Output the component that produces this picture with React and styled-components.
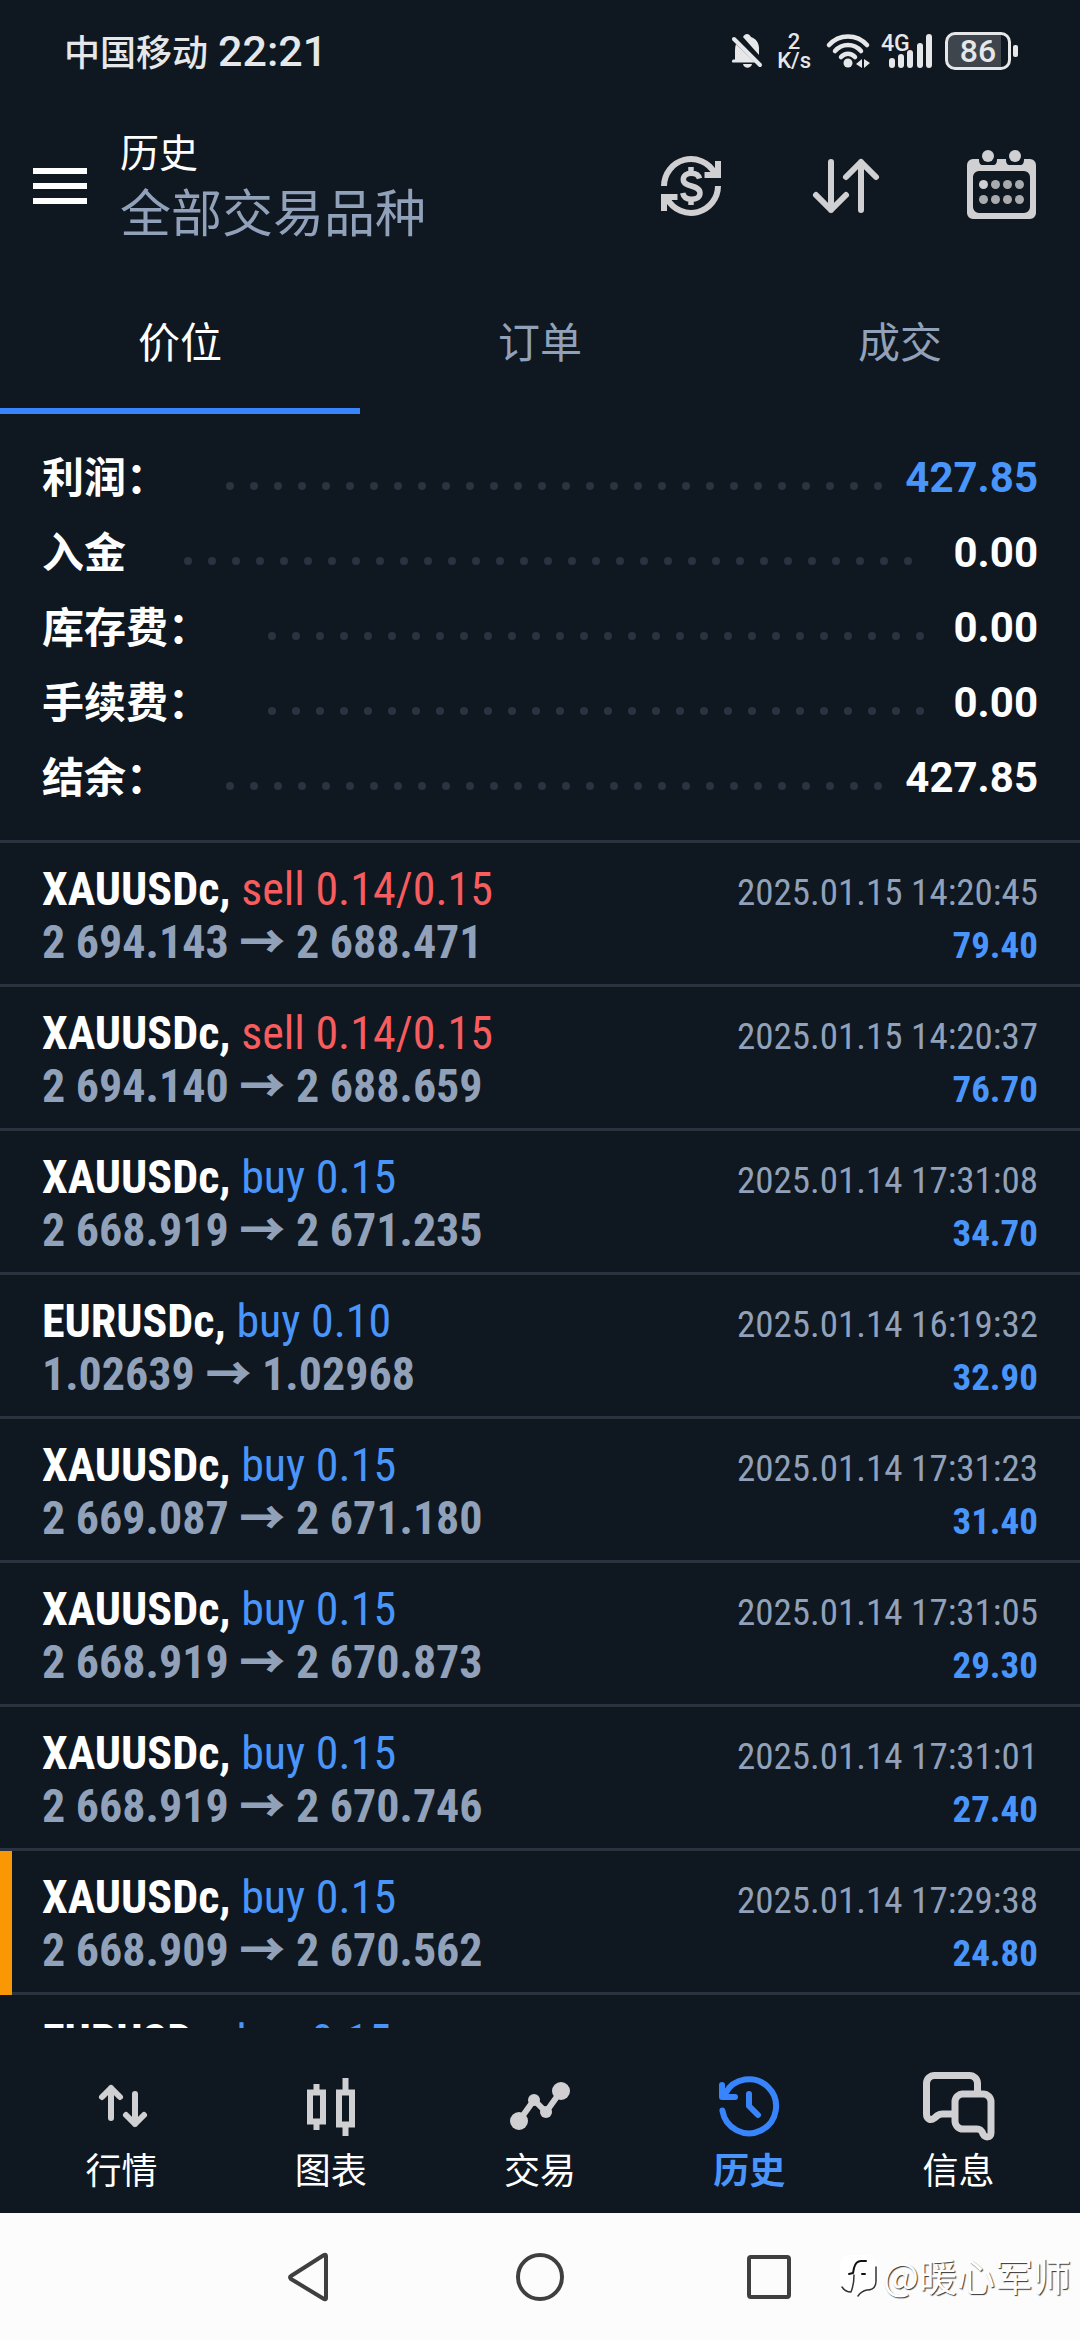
import styled, { createGlobalStyle, css } from "styled-components";

const GlobalStyle = createGlobalStyle`
  :root {
    --bg: #0f1720;
    --line: #2a3441;
    --muted: #90a1b9;
    --blue: #4a95fa;
    --accent: #3784fc;
    --red: #f75c5e;
    --icon: #d0d0d2;
    --status: #e6e7e9;
    --marker: #f99804;
  }

  * {
    box-sizing: border-box;
  }

  body {
    margin: 0;
    background: var(--bg);
    color: #fff;
    font-family: Roboto, "Noto Sans CJK SC", sans-serif;
  }

  button {
    border: 0;
    padding: 0;
    background: none;
    color: inherit;
    font: inherit;
  }

  svg {
    display: block;
    overflow: visible;
  }
`;

const Screen = styled.div`
  height: 100vh;
  display: flex;
  flex-direction: column;
`;

const StatusBar = styled.div`
  flex: none;
  height: 102px;
  padding: 0 62px 0 64px;
  display: flex;
  align-items: center;
  color: var(--status);
`;

const Carrier = styled.span`
  padding-bottom: 3px;
  font-family: "Noto Sans CJK SC", sans-serif;
  font-size: 36px;
  font-weight: 500;
  line-height: 48px;
`;

const Clock = styled.time`
  margin: 0 auto 0 10px;
  font-size: 43px;
  font-weight: 500;
  line-height: 48px;
`;

const NetSpeed = styled.span`
  margin: 0 14px;
  font-size: 22px;
  font-weight: 500;
  line-height: 19px;
  text-align: center;
`;

const SignalWrap = styled.span`
  margin-left: 10px;
`;

const Battery = styled.span`
  width: 66px;
  height: 38px;
  margin-left: 12px;
  border: 3px solid var(--status);
  border-radius: 10px;
  background: linear-gradient(90deg, #3f454d 88%, transparent 88%);
  font-size: 32px;
  font-weight: 500;
  line-height: 33px;
  text-align: center;
`;

const BatteryTip = styled.span`
  width: 5px;
  height: 12px;
  margin-left: 2px;
  border-radius: 2px;
  background: var(--status);
`;

const Header = styled.header`
  flex: none;
  height: 168px;
  padding: 0 43px 0 33px;
  display: flex;
  align-items: center;
`;

const Title = styled.h1`
  flex: 1;
  margin: 0 0 12px 33px;
  font-family: "Noto Sans CJK SC", sans-serif;
  font-size: 39px;
  font-weight: 400;
  line-height: 60px;
`;

const Subtitle = styled.span`
  display: block;
  color: var(--muted);
  font-size: 51px;
`;

const Actions = styled.div`
  display: flex;
  gap: 83px;
  color: var(--icon);
`;

const Tabs = styled.div`
  flex: none;
  display: grid;
  grid-template-columns: repeat(3, 1fr);
`;

const Tab = styled.button`
  height: 144px;
  padding-bottom: 6px;
  font-family: "Noto Sans CJK SC", sans-serif;
  font-size: 42px;
  color: ${({ $active }) => ($active ? "#fff" : "var(--muted)")};
  box-shadow: ${({ $active }) => ($active ? "inset 0 -6px var(--accent)" : "none")};
`;

const Summary = styled.dl`
  flex: none;
  margin: 0;
  padding: 26px 42px 25px;
  font-size: 42px;
  font-weight: 700;
  line-height: 60px;
`;

const SummaryRow = styled.div`
  height: 75px;
  display: flex;
  align-items: center;
`;

const Label = styled.dt`
  padding-bottom: 6px;
  font-family: "Noto Sans CJK SC", sans-serif;
`;

const Amount = styled.dd`
  margin: 0;
  color: ${({ $profit }) => ($profit ? "var(--blue)" : "#fff")};
`;

// dots that do not fit wrap to a second line, which is hidden
const Leader = styled.span`
  flex: 1;
  height: 8px;
  margin: 16px 14px 0 50px;
  overflow: hidden;
  display: flex;
  flex-wrap: wrap;
`;

const Dot = styled.i`
  width: 8px;
  height: 8px;
  margin: 0 8px;
  border-radius: 50%;
  background: var(--line);
`;

const TradeList = styled.ul`
  flex: 1;
  min-height: 0;
  margin: 0;
  padding: 0;
  overflow: hidden;
  list-style: none;
  font-family: "Roboto Condensed", "Liberation Sans Narrow", sans-serif;
  font-size: 46px;
  line-height: 51px;
`;

const TradeItem = styled.li`
  position: relative;
  border-top: 3px solid var(--line);
  padding: 21px 42px 18px;

  ${({ $marked }) =>
    $marked &&
    css`
      &::before {
        content: "";
        position: absolute;
        z-index: 1;
        top: 0;
        bottom: -3px;
        left: 0;
        width: 12px;
        background: var(--marker);
      }
    `}
`;

const Line = styled.div`
  height: 51px;
  display: flex;
  justify-content: space-between;
  align-items: baseline;
  white-space: nowrap;
`;

const Side = styled.span`
  font-weight: 400;
  color: ${({ $side }) => ($side === "sell" ? "var(--red)" : "var(--blue)")};
`;

const Prices = styled.span`
  font-weight: 700;
  color: var(--muted);
`;

const Arrow = styled.span`
  font-family: "Noto Sans CJK SC", sans-serif;
  font-weight: 900;
  line-height: 1;
`;

const Time = styled.time`
  font-size: 37px;
  color: var(--muted);
`;

const Profit = styled.strong`
  font-size: 37px;
  color: var(--blue);
`;

const BottomNav = styled.nav`
  flex: none;
  padding: 42px 17px 18px;
  display: grid;
  grid-template-columns: repeat(5, 1fr);
`;

const NavLink = styled.a`
  display: flex;
  flex-direction: column;
  align-items: center;
  font-family: "Noto Sans CJK SC", sans-serif;
  font-size: 36px;
  font-weight: ${({ $active }) => ($active ? 700 : 400)};
  line-height: 53px;
  text-decoration: none;
  color: ${({ $active }) => ($active ? "var(--blue)" : "#fff")};

  svg {
    color: ${({ $active }) => ($active ? "var(--accent)" : "var(--icon)")};
  }
`;

const SystemNav = styled.div`
  flex: none;
  position: relative;
  height: 127px;
  display: flex;
  justify-content: center;
  align-items: center;
  gap: 158px;
  background: #fcfcfc;
  color: #3f3f3f;
`;

const Watermark = styled.div`
  position: absolute;
  right: 9px;
  bottom: 40px;
  display: flex;
  align-items: center;
  gap: 4px;
  font-family: "Noto Sans CJK SC", sans-serif;
  font-size: 38px;
  line-height: 50px;
  color: #fff;
  text-shadow: 1px 1px 1px #333;
`;

const Icon = ({ size = 72, width = size, height = size, sw = 6, children }) => (
  <svg
    width={width}
    height={height}
    viewBox={`0 0 ${width} ${height}`}
    fill="none"
    stroke="currentColor"
    strokeWidth={sw}
    strokeLinecap="round"
    strokeLinejoin="round"
    aria-hidden="true"
  >
    {children}
  </svg>
);

const BellOffIcon = () => (
  <Icon width={32} height={36} sw={4}>
    <g fill="currentColor" stroke="none">
      <path d="M12 4C13 2 14.500 1 16 1s3 1 4 3c5 1.500 8 6 8 11v7z" />
      <path d="M5 11 24 29.500H2c-1.500 0-1.500-2 0-3h2V17c0-2 .3-4 1-6z" />
      <path d="M12 31h9c-1 5-8 5-9 0z" />
    </g>
    <path d="M3 6 29 32" />
  </Icon>
);

const WifiIcon = () => (
  <Icon width={46} height={36} sw={4.5}>
    <path d="M4 12C14 .5 32 .5 42 12M10 18c7-8 19-8 26 0M16 24c4-4.500 10-4.500 14 0" />
    <circle cx="23" cy="30" r="4.500" fill="currentColor" stroke="none" />
    <path d="M37 26v9l-6-4zM39 26v9l6-5z" fill="currentColor" stroke="none" />
  </Icon>
);

const SignalText = styled.text`
  font-size: 23px;
  font-weight: 500;
  fill: currentColor;
  stroke: none;
`;

const SignalIcon = () => (
  <Icon width={52} height={38}>
    <SignalText x="0" y="19">4G</SignalText>
    <path d="M11 29v4M20 25v8M29 21v12M39 14v19M48 5v28" />
  </Icon>
);

const MenuIcon = () => (
  <svg width="54" height="36" fill="#fff" aria-hidden="true">
    <path d="M0 0h54v6H0zM0 15h54v6H0zM0 30h54v6H0z" />
  </svg>
);

const CurrencyIcon = () => (
  <Icon>
    <g strokeLinecap="butt" strokeLinejoin="miter">
      <path d="M9 36A27 27 0 0 1 59.500 22.800M63 11v14H49.500" />
      <path d="M63 36A27 27 0 0 1 12.500 49.200M9 61V47h13.500" />
      <path
        strokeWidth="5.500"
        d="M44.500 28.500C43.500 25 40.500 23.200 36.500 23.200c-5 0-8.200 2.600-8.200 6.300 0 8.500 16.700 4.500 16.700 13.500 0 4-3.500 6.300-8.500 6.300s-8-2.300-8.800-6.300M36 17v6M36 49v6"
      />
    </g>
  </Icon>
);

const SortIcon = () => (
  <Icon>
    <path d="M21 12v48M6 45l15 15 15-15M51 60V12M36 27l15-15 15 15" />
  </Icon>
);

const CalendarIcon = () => (
  <Icon>
    <g fill="currentColor" stroke="none">
      <path
        fillRule="evenodd"
        d="M8 9h6c0 4 1 6 4 6h10c3 0 4-2 4-6h9c0 4 1 6 4 6h10c3 0 4-2 4-6h6a6 6 0 0 1 6 6v48a6 6 0 0 1-6 6H8a6 6 0 0 1-6-6V15a6 6 0 0 1 6-6zM14 21a6 6 0 0 0-6 6v30a6 6 0 0 0 6 6h45a6 6 0 0 0 6-6V27a6 6 0 0 0-6-6z"
      />
      <circle cx="23" cy="6" r="6" />
      <circle cx="50" cy="6" r="6" />
      {[34.5, 49.5].map((cy) =>
        [18.5, 30.5, 42.5, 54.5].map((cx) => (
          <circle
            key={`${cx}-${cy}`}
            cx={cx}
            cy={cy}
            r="4.500"
            opacity={cx < 20 && cy < 40 ? 1 : 0.8}
          />
        ))
      )}
    </g>
  </Icon>
);

const QuotesIcon = () => (
  <Icon>
    <path d="M25 48V18M16 27l9-9 9 9M49 24v30M40 45l9 9 9-9" />
  </Icon>
);

const ChartIcon = () => (
  <Icon>
    <g strokeLinecap="butt" strokeLinejoin="miter">
      <path d="M15 22.500h13v29H15zM44 22.500h13v32H44zM21.500 14v6M21.500 54v6M50.500 8v12M50.500 57v9" />
    </g>
  </Icon>
);

const TradeIcon = () => (
  <Icon>
    <path d="M15 51 30 30l12 12 15-21" />
    <g fill="currentColor" stroke="none">
      <circle cx="15" cy="51" r="9" />
      <circle cx="30" cy="30" r="6" />
      <circle cx="42" cy="42" r="6" />
      <circle cx="57" cy="21" r="9" />
    </g>
  </Icon>
);

const HistoryIcon = () => (
  <Icon>
    <path d="M9.400 40.500A27 27 0 1 0 12 24M9 15v12h13M36 24v12l9 9" />
  </Icon>
);

const MessagesIcon = () => (
  <Icon sw={7}>
    <path d="M55.500 21v-7.500a8 8 0 0 0-8-8h-35a8 8 0 0 0-8 8V44c0 5 4 7 8 4l3-2.500c1.500-1 3-1.500 5-1.500H30" />
    <path d="M40 24h21a8 8 0 0 1 8 8v31c0 5-6 5-8 1-1.500-4-3-5-6-5H41a8 8 0 0 1-8-8V32a8 8 0 0 1 8-8z" />
  </Icon>
);

const FlameLogo = () => (
  <Icon width={40} height={44} sw={2}>
    <rect x="1" y="2" width="36" height="36" rx="10" fill="#fff" stroke="none" />
    <path stroke="#111" d="M27 8h-5c-4 0-6 3-7 7l-1 5-4 1M23 21h3" />
    <path stroke="#333" strokeWidth="1.500" d="M15 22c0 7-1 12-3 17-4 0-7-2-9-5M37 14v14c0 7-4 9-9 9-5 1-7 3-9 6" />
  </Icon>
);

const summary = [
  { label: "利润：", value: "427.85", profit: true },
  { label: "入金", value: "0.00" },
  { label: "库存费：", value: "0.00" },
  { label: "手续费：", value: "0.00" },
  { label: "结余：", value: "427.85" },
];

const trades = [
  { symbol: "XAUUSDc", side: "sell", volume: "0.14/0.15", open: "2 694.143", close: "2 688.471", time: "2025.01.15 14:20:45", profit: "79.40" },
  { symbol: "XAUUSDc", side: "sell", volume: "0.14/0.15", open: "2 694.140", close: "2 688.659", time: "2025.01.15 14:20:37", profit: "76.70" },
  { symbol: "XAUUSDc", side: "buy", volume: "0.15", open: "2 668.919", close: "2 671.235", time: "2025.01.14 17:31:08", profit: "34.70" },
  { symbol: "EURUSDc", side: "buy", volume: "0.10", open: "1.02639", close: "1.02968", time: "2025.01.14 16:19:32", profit: "32.90" },
  { symbol: "XAUUSDc", side: "buy", volume: "0.15", open: "2 669.087", close: "2 671.180", time: "2025.01.14 17:31:23", profit: "31.40" },
  { symbol: "XAUUSDc", side: "buy", volume: "0.15", open: "2 668.919", close: "2 670.873", time: "2025.01.14 17:31:05", profit: "29.30" },
  { symbol: "XAUUSDc", side: "buy", volume: "0.15", open: "2 668.919", close: "2 670.746", time: "2025.01.14 17:31:01", profit: "27.40" },
  { symbol: "XAUUSDc", side: "buy", volume: "0.15", open: "2 668.909", close: "2 670.562", time: "2025.01.14 17:29:38", profit: "24.80", marked: true },
  { symbol: "EURUSDc", side: "buy", volume: "0.15" },
];

const navItems = [
  { label: "行情", href: "#quotes", NavIcon: QuotesIcon },
  { label: "图表", href: "#chart", NavIcon: ChartIcon },
  { label: "交易", href: "#trade", NavIcon: TradeIcon },
  { label: "历史", href: "#history", NavIcon: HistoryIcon, active: true },
  { label: "信息", href: "#messages", NavIcon: MessagesIcon },
];

const Trade = ({ trade }) => (
  <TradeItem $marked={trade.marked}>
    <Line>
      <strong>
        {trade.symbol},{" "}
        <Side $side={trade.side}>
          {trade.side} {trade.volume}
        </Side>
      </strong>
      {trade.time && <Time>{trade.time}</Time>}
    </Line>
    {trade.open && (
      <Line>
        <Prices>
          {trade.open} <Arrow>→</Arrow> {trade.close}
        </Prices>
        <Profit>{trade.profit}</Profit>
      </Line>
    )}
  </TradeItem>
);

export default function App() {
  return (
    <>
      <GlobalStyle />
      <Screen>
        <StatusBar>
          <Carrier>中国移动</Carrier>
          <Clock>22:21</Clock>
          <BellOffIcon />
          <NetSpeed>
            2<br />
            K/s
          </NetSpeed>
          <WifiIcon />
          <SignalWrap>
            <SignalIcon />
          </SignalWrap>
          <Battery>86</Battery>
          <BatteryTip />
        </StatusBar>
        <Header>
          <button aria-label="菜单">
            <MenuIcon />
          </button>
          <Title>
            历史
            <Subtitle>全部交易品种</Subtitle>
          </Title>
          <Actions>
            <button aria-label="品种">
              <CurrencyIcon />
            </button>
            <button aria-label="排序">
              <SortIcon />
            </button>
            <button aria-label="日期">
              <CalendarIcon />
            </button>
          </Actions>
        </Header>
        <Tabs role="tablist">
          <Tab role="tab" aria-selected="true" $active>
            价位
          </Tab>
          <Tab role="tab">订单</Tab>
          <Tab role="tab">成交</Tab>
        </Tabs>
        <Summary>
          {summary.map(({ label, value, profit }) => (
            <SummaryRow key={label}>
              <Label>{label}</Label>
              <Leader aria-hidden="true">
                {Array.from({ length: 60 }, (_, i) => (
                  <Dot key={i} />
                ))}
              </Leader>
              <Amount $profit={profit}>{value}</Amount>
            </SummaryRow>
          ))}
        </Summary>
        <TradeList>
          {trades.map((trade, i) => (
            <Trade key={i} trade={trade} />
          ))}
        </TradeList>
        <BottomNav>
          {navItems.map(({ label, href, NavIcon, active }) => (
            <NavLink key={href} href={href} $active={active}>
              <NavIcon />
              {label}
            </NavLink>
          ))}
        </BottomNav>
        <SystemNav>
          <button aria-label="返回">
            <Icon sw={4}>
              <path d="M52 15v42q0 2-2 1L17 38q-2-2 0-3L50 14q2-1 2 1z" />
            </Icon>
          </button>
          <button aria-label="主屏幕">
            <Icon sw={4}>
              <circle cx="36" cy="36" r="22" />
            </Icon>
          </button>
          <button aria-label="最近任务">
            <Icon sw={4}>
              <rect x="15" y="16" width="40" height="40" rx="2" />
            </Icon>
          </button>
          <Watermark>
            <FlameLogo />
            @暖心军师
          </Watermark>
        </SystemNav>
      </Screen>
    </>
  );
}
